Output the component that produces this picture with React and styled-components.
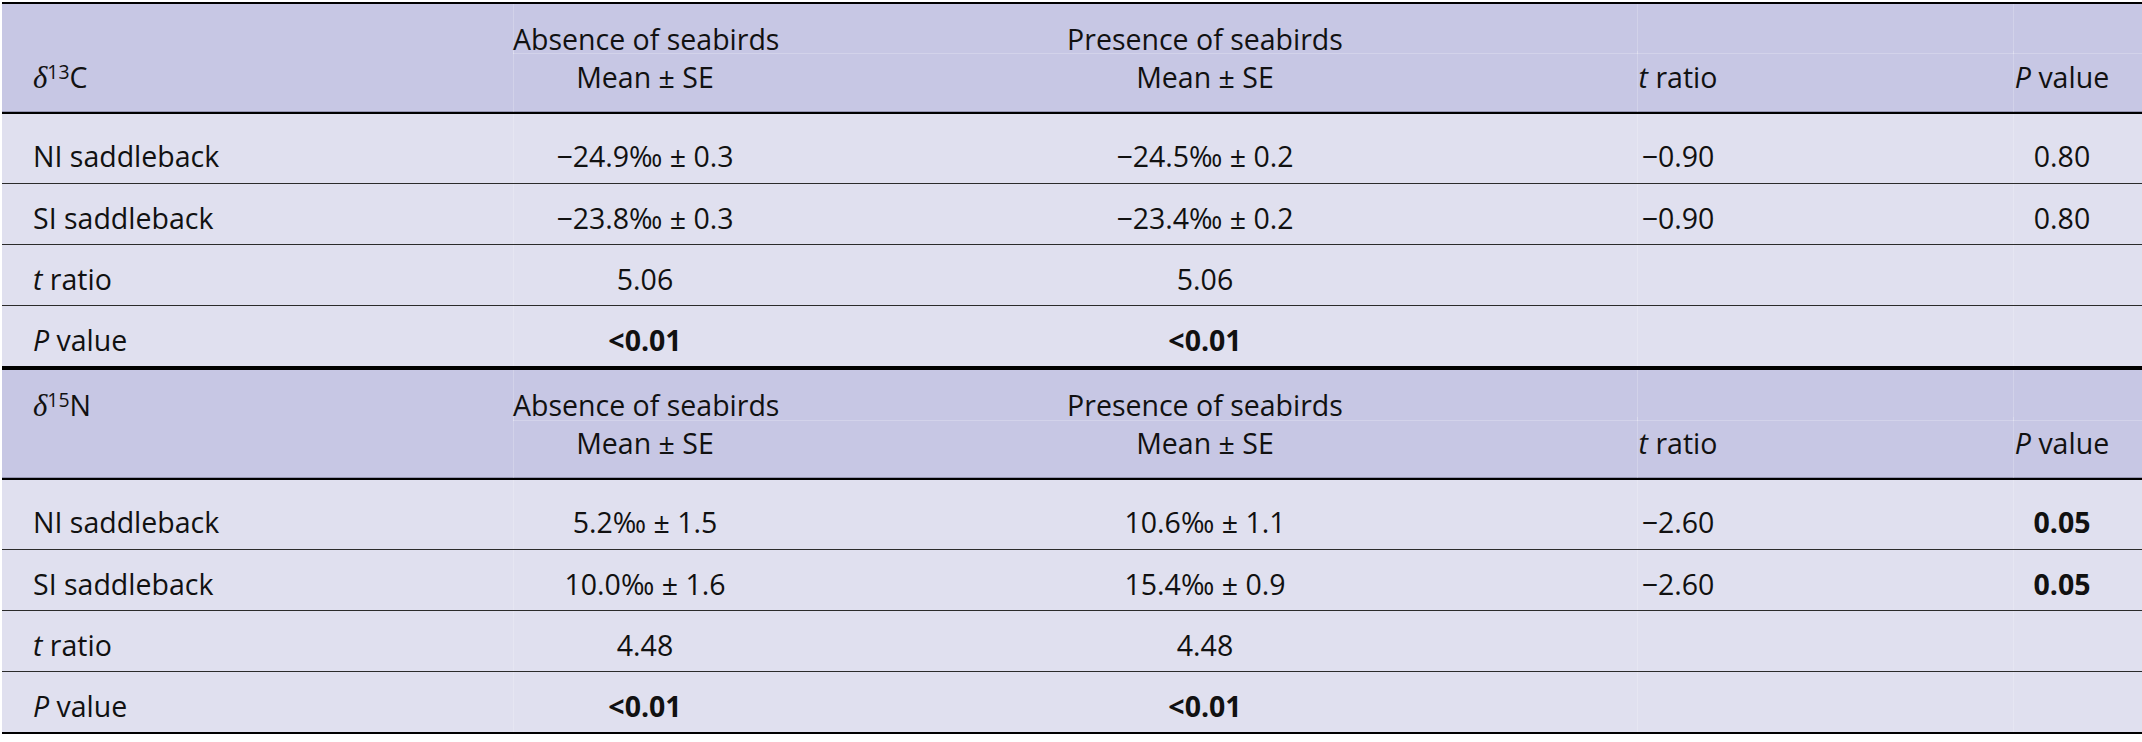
import React from "react";
import styled, { createGlobalStyle } from "styled-components";

const GlobalStyle = createGlobalStyle`
  * {
    box-sizing: border-box;
  }
  body {
    margin: 0;
    background: #ffffff;
    font-family: "Open Sans", Lato, sans-serif;
    color: #111;
  }
`;

const COLUMNS = "511px 264px 860px 376px 129px";

const Page = styled.div`
  padding: 2px 0 0 2px;
`;

const Section = styled.section`
  width: 2140px;
  border-top: 2px solid #000;
  border-bottom: 2px solid #000;
`;

const Head = styled.div`
  background: #c7c7e4;
  border-bottom: 2px solid #000;
`;

const Row = styled.div`
  display: grid;
  grid-template-columns: ${COLUMNS};
  height: ${(p) => p.$h}px;
  font-size: 28.5px;
  line-height: 30px;
`;

const HeadRow = styled(Row)`
  box-shadow: ${(p) => (p.$last ? "inset 0 -1px 0 #9696b2" : "none")};
`;

const BodyRow = styled(Row)`
  background: #e0e0ef;
  & + & {
    border-top: 1px solid #2b2b2b;
  }
`;

const Cell = styled.div`
  padding-top: ${(p) => p.$pt}px;
  padding-left: ${(p) => (p.$first ? 31 : 0)}px;
  padding-right: ${(p) => p.$pr || 0}px;
  text-align: ${(p) => (p.$first ? "left" : "center")};
  font-weight: ${(p) => (p.$bold ? 700 : 400)};
  white-space: nowrap;
  box-shadow: ${(p) =>
    [
      p.$divider ? "inset 1px 0 0 rgba(255,255,255,0.2)" : null,
      p.$under ? "inset 0 -1px 0 rgba(255,255,255,0.22)" : null,
    ]
      .filter(Boolean)
      .join(", ") || "none"};
`;

const Em = styled.i`
  font-style: italic;
`;

const Delta = styled.i`
  font-family: "Liberation Serif", "DejaVu Serif", serif;
  font-style: italic;
  font-size: 1.08em;
`;

const Sup = styled.sup`
  font-size: 0.68em;
  line-height: 0;
  vertical-align: 0.48em;
`;

// per-column right padding so the text centres line up with the reference
const PAD = [0, 0, 4, 294, 31];
const DIVIDER = [false, true, false, true, true];

const sections = [
  {
    iso: ["13", "C"],
    labelTop: false,
    rows: [
      ["NI saddleback", "−24.9‰ ± 0.3", "−24.5‰ ± 0.2", "−0.90", "0.80"],
      ["SI saddleback", "−23.8‰ ± 0.3", "−23.4‰ ± 0.2", "−0.90", "0.80"],
      ["t", "5.06", "5.06", "", ""],
      ["P", { b: "<0.01" }, { b: "<0.01" }, "", ""],
    ],
  },
  {
    iso: ["15", "N"],
    labelTop: true,
    rows: [
      ["NI saddleback", "5.2‰ ± 1.5", "10.6‰ ± 1.1", "−2.60", { b: "0.05" }],
      ["SI saddleback", "10.0‰ ± 1.6", "15.4‰ ± 0.9", "−2.60", { b: "0.05" }],
      ["t", "4.48", "4.48", "", ""],
      ["P", { b: "<0.01" }, { b: "<0.01" }, "", ""],
    ],
  },
];

function RowLabel({ text }) {
  if (text === "t")
    return (
      <>
        <Em>t</Em> ratio
      </>
    );
  if (text === "P")
    return (
      <>
        <Em>P</Em> value
      </>
    );
  return text;
}

function IsoLabel({ iso }) {
  return (
    <>
      <Delta>δ</Delta>
      <Sup>{iso[0]}</Sup>
      {iso[1]}
    </>
  );
}

function StatSection({ iso, labelTop, rows }) {
  return (
    <Section>
      <Head>
        <HeadRow $h={47}>
          <Cell $first $pt={20}>
            {labelTop && <IsoLabel iso={iso} />}
          </Cell>
          <Cell $pt={20} $divider $under>
            Absence of seabirds
          </Cell>
          <Cell $pt={20} $pr={PAD[2]} $under>
            Presence of seabirds
          </Cell>
          <Cell $pt={20} $divider $under />
          <Cell $pt={20} $divider $under />
        </HeadRow>
        <HeadRow $h={61} $last>
          <Cell $first $pt={11}>
            {!labelTop && <IsoLabel iso={iso} />}
          </Cell>
          <Cell $pt={11} $divider>
            Mean ± SE
          </Cell>
          <Cell $pt={11} $pr={PAD[2]}>
            Mean ± SE
          </Cell>
          <Cell $pt={11} $pr={PAD[3]} $divider>
            <Em>t</Em> ratio
          </Cell>
          <Cell $pt={11} $pr={PAD[4]} $divider>
            <Em>P</Em> value
          </Cell>
        </HeadRow>
      </Head>
      {rows.map((row, i) => (
        <BodyRow key={i} $h={i === 0 ? 69 : 61}>
          {row.map((value, c) => {
            const bold = typeof value === "object";
            const text = bold ? value.b : value;
            return (
              <Cell
                key={c}
                $first={c === 0}
                $pt={i === 0 ? 27 : 19}
                $pr={PAD[c]}
                $divider={DIVIDER[c]}
                $bold={bold}
              >
                {c === 0 ? <RowLabel text={text} /> : text}
              </Cell>
            );
          })}
        </BodyRow>
      ))}
    </Section>
  );
}

export default function App() {
  return (
    <>
      <GlobalStyle />
      <Page>
        {sections.map((s) => (
          <StatSection key={s.iso.join("")} {...s} />
        ))}
      </Page>
    </>
  );
}
